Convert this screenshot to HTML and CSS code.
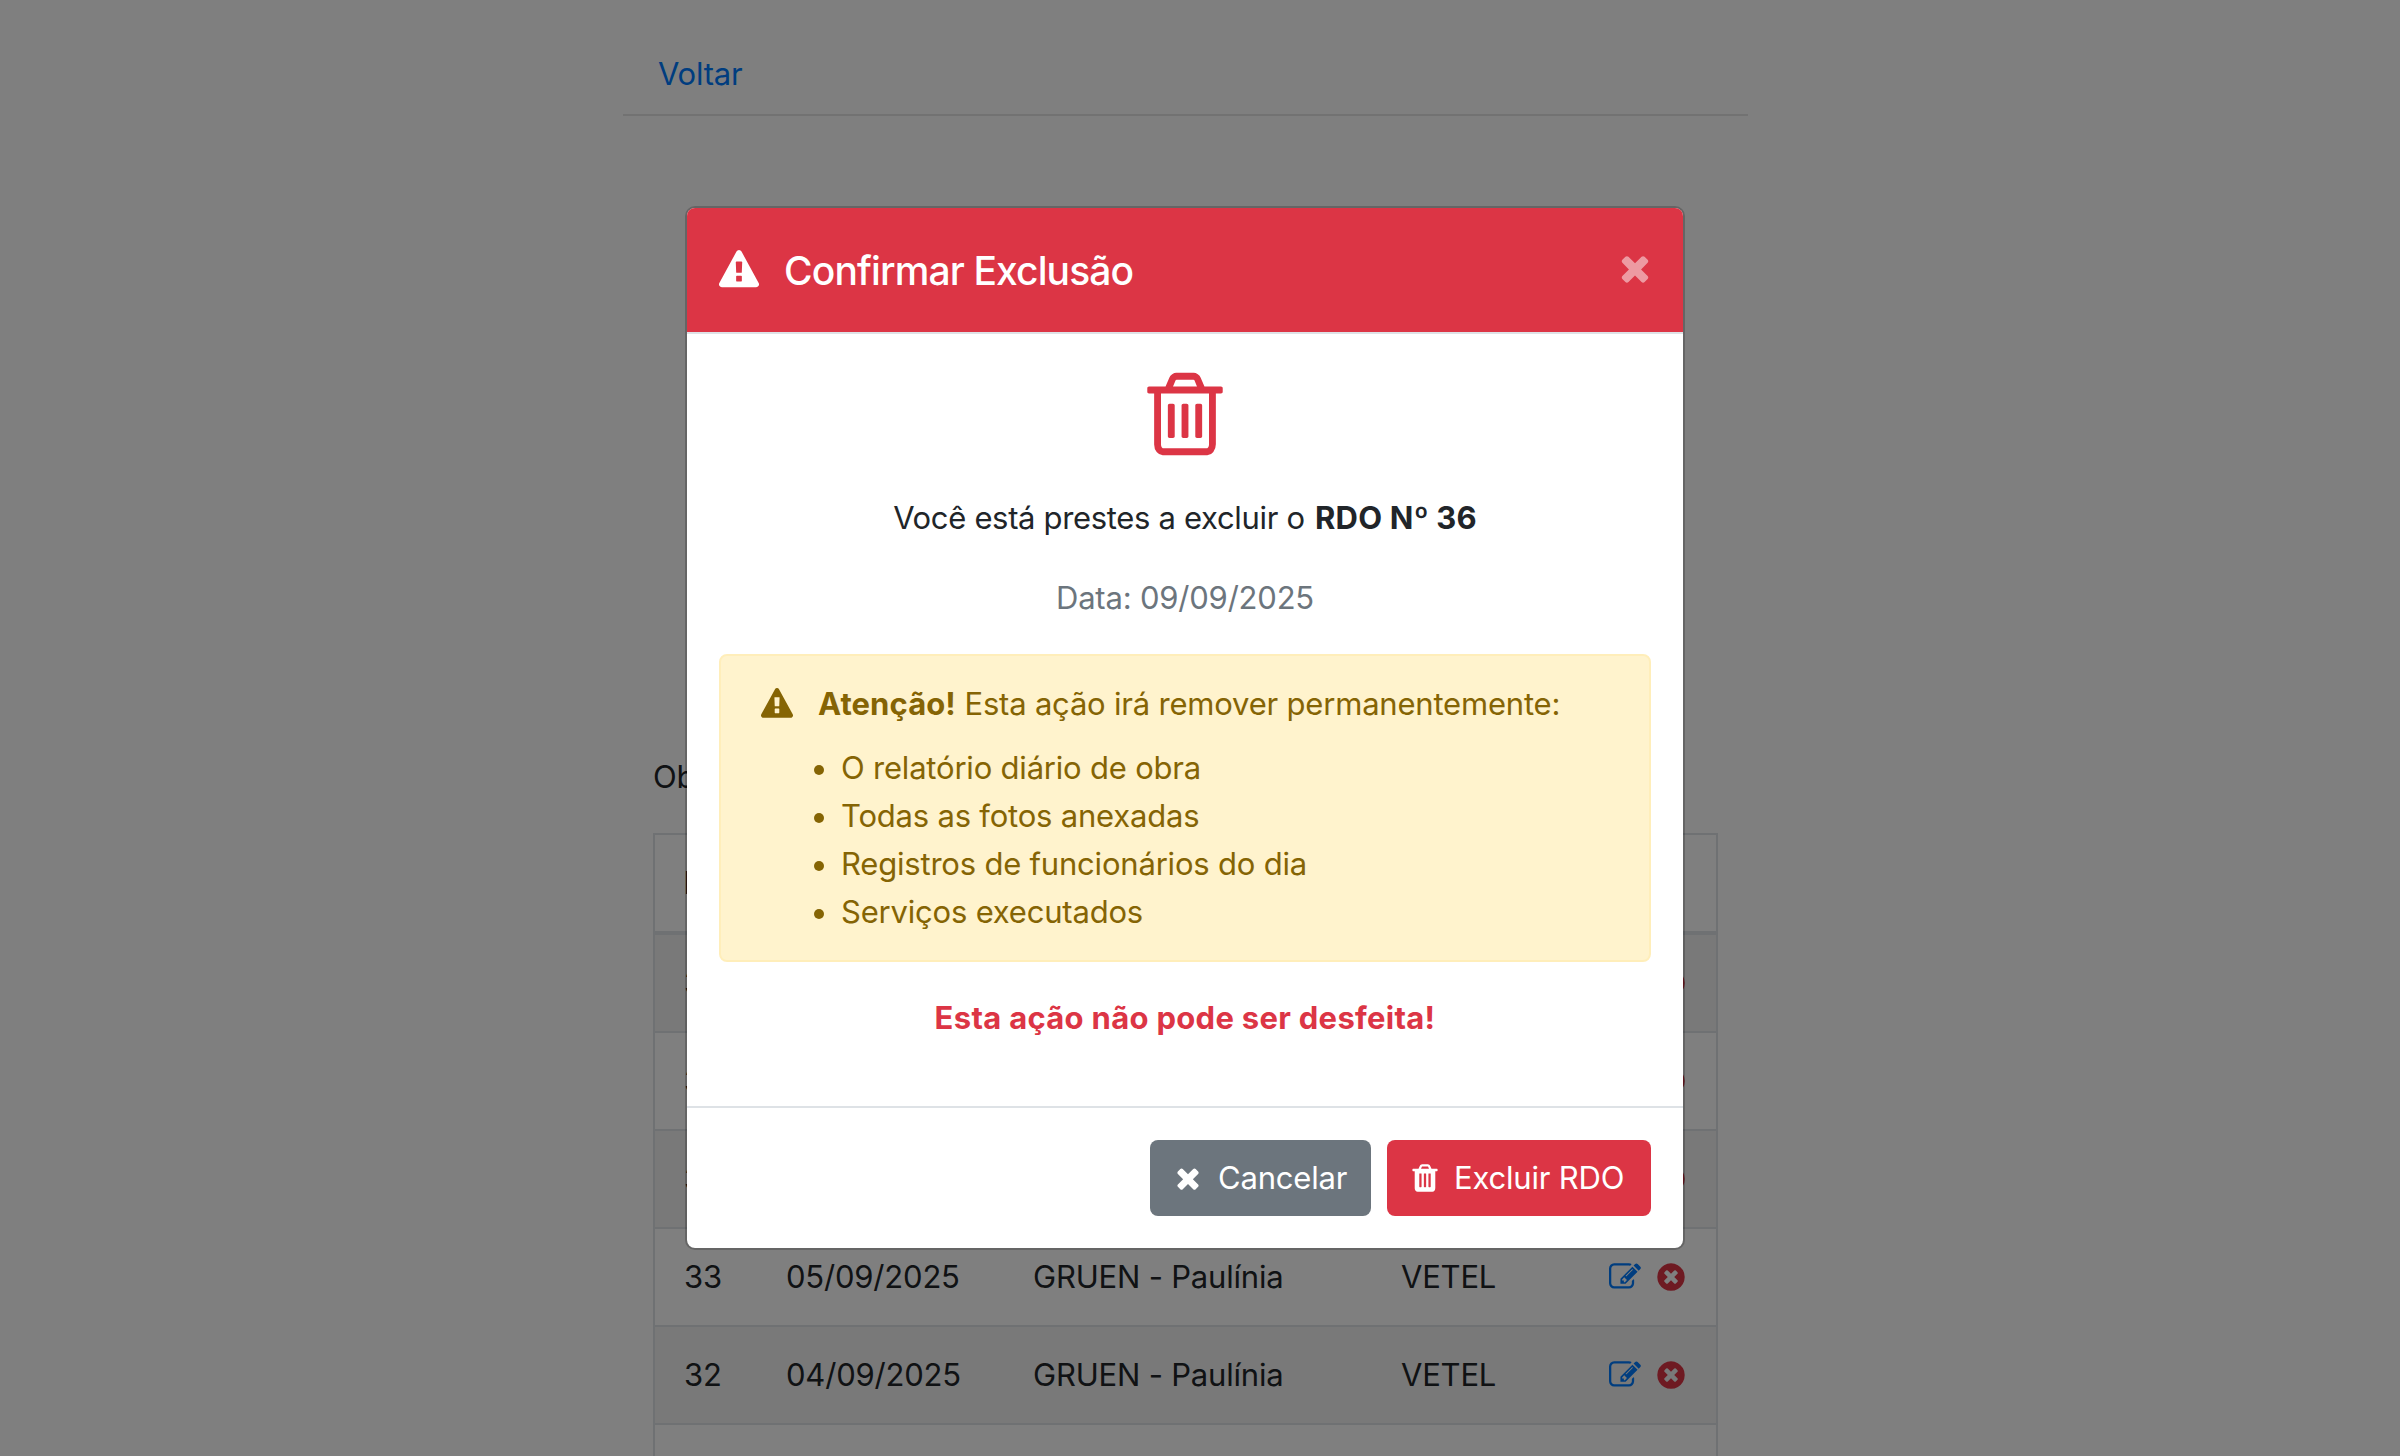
FILE: index.html
```html
<!DOCTYPE html>
<html lang="pt-BR">
<head>
<meta charset="utf-8">
<title>Relatórios</title>
<link rel="stylesheet" href="styles.css">
</head>
<body>
<svg class="sprite" aria-hidden="true">
  <symbol id="warning" viewBox="0 0 1792 1792"><path d="M1024 1375v-190q0-14-9.5-23.5t-22.5-9.5h-192q-13 0-22.5 9.5t-9.5 23.5v190q0 14 9.5 23.5t22.5 9.5h192q13 0 22.5-9.5t9.5-23.5zm-2-374l18-459q0-12-10-19-13-11-24-11h-220q-11 0-24 11-10 7-10 21l17 457q0 10 10 16.5t24 6.5h185q14 0 23.5-6.5t10.5-16.5zm-14-934l768 1408q35 63-2 126-17 29-46.5 46t-63.5 17h-1536q-34 0-63.5-17t-46.5-46q-37-63-2-126l768-1408q17-31 47-49t65-18 65 18 47 49z"/></symbol>
  <symbol id="times" viewBox="0 0 1792 1792"><path d="M1490 1322q0 40-28 68l-136 136q-28 28-68 28t-68-28l-294-294-294 294q-28 28-68 28t-68-28l-136-136q-28-28-28-68t28-68l294-294-294-294q-28-28-28-68t28-68l136-136q28-28 68-28t68 28l294 294 294-294q28-28 68-28t68 28l136 136q28 28 28 68t-28 68l-294 294 294 294q28 28 28 68z"/></symbol>
  <symbol id="trash-o" viewBox="0 0 1792 1792"><path d="M704 736v576q0 14-9 23t-23 9h-64q-14 0-23-9t-9-23v-576q0-14 9-23t23-9h64q14 0 23 9t9 23zm256 0v576q0 14-9 23t-23 9h-64q-14 0-23-9t-9-23v-576q0-14 9-23t23-9h64q14 0 23 9t9 23zm256 0v576q0 14-9 23t-23 9h-64q-14 0-23-9t-9-23v-576q0-14 9-23t23-9h64q14 0 23 9t9 23zm128 724v-948h-896v948q0 22 7 40.5t14.5 27 10.5 8.5h832q3 0 10.5-8.5t14.5-27 7-40.5zm-672-1076h448l-48-117q-7-9-17-11h-317q-10 2-17 11zm928 32v64q0 14-9 23t-23 9h-96v948q0 83-47 143.5t-113 60.5h-832q-66 0-113-58.5t-47-141.5v-952h-96q-14 0-23-9t-9-23v-64q0-14 9-23t23-9h309l70-167q15-37 54-63t79-26h320q40 0 79 26t54 63l70 167h309q14 0 23 9t9 23z"/></symbol>
  <symbol id="trash" viewBox="0 0 1792 1792"><path d="M704 1376v-704q0-14-9-23t-23-9h-64q-14 0-23 9t-9 23v704q0 14 9 23t23 9h64q14 0 23-9t9-23zm256 0v-704q0-14-9-23t-23-9h-64q-14 0-23 9t-9 23v704q0 14 9 23t23 9h64q14 0 23-9t9-23zm256 0v-704q0-14-9-23t-23-9h-64q-14 0-23 9t-9 23v704q0 14 9 23t23 9h64q14 0 23-9t9-23zm-544-992h448l-48-117q-7-9-17-11h-317q-10 2-17 11zm928 32v64q0 14-9 23t-23 9h-96v948q0 83-47 143.5t-113 60.5h-832q-66 0-113-58.5t-47-141.5v-952h-96q-14 0-23-9t-9-23v-64q0-14 9-23t23-9h309l70-167q15-37 54-63t79-26h320q40 0 79 26t54 63l70 167h309q14 0 23 9t9 23z"/></symbol>
  <symbol id="edit" viewBox="0 0 1792 1792"><path d="M888 1184l116-116-152-152-116 116v56h96v96h56zm440-720q-16-16-33 1l-350 350q-17 17-1 33t33-1l350-350q17-17 1-33zm80 594v190q0 119-84.5 203.5t-203.5 84.5h-832q-119 0-203.5-84.5t-84.5-203.5v-832q0-119 84.5-203.5t203.5-84.5h832q63 0 117 25 15 7 18 23 3 17-9 29l-49 49q-14 14-32 8-23-6-45-6h-832q-66 0-113 47t-47 113v832q0 66 47 113t113 47h832q66 0 113-47t47-113v-126q0-13 9-22l64-64q15-15 35-7t20 29zm-96-738l288 288-672 672h-288v-288zm444 132l-92 92-288-288 92-92q28-28 68-28t68 28l152 152q28 28 28 68t-28 68z"/></symbol>
  <symbol id="remove" viewBox="0 0 1792 1792"><path d="M1277 1122q0-26-19-45l-181-181 181-181q19-19 19-45 0-27-19-46l-90-90q-19-19-46-19-26 0-45 19l-181 181-181-181q-19-19-45-19-27 0-46 19l-90 90q-19 19-19 46 0 26 19 45l181 181-181 181q-19 19-19 45 0 27 19 46l90 90q19 19 46 19 26 0 45-19l181-181 181 181q19 19 45 19 27 0 46-19l90-90q19-19 19-46zm387-226q0 209-103 385.5t-279.5 279.5-385.5 103-385.5-103-279.5-279.5-103-385.5 103-385.5 279.5-279.5 385.5-103 385.5 103 279.5 279.5 103 385.5z"/></symbol>
</svg>

<main class="page">
  <nav class="nav"><a class="nav-link" href="#">Voltar</a></nav>
  <section class="content">
    <p class="label">Obra</p>
    <table class="table">
      <colgroup><col class="c-num"><col class="c-date"><col class="c-work"><col class="c-client"><col></colgroup>
      <thead><tr><th>Nº</th><th></th><th></th><th></th><th></th></tr></thead>
      <tbody>
        <tr><td>36</td><td></td><td></td><td></td><td><div class="actions"><svg class="icon edit"><use href="#edit"/></svg><svg class="icon remove"><use href="#remove"/></svg></div></td></tr>
        <tr><td>35</td><td></td><td></td><td></td><td><div class="actions"><svg class="icon edit"><use href="#edit"/></svg><svg class="icon remove"><use href="#remove"/></svg></div></td></tr>
        <tr><td>34</td><td></td><td></td><td></td><td><div class="actions"><svg class="icon edit"><use href="#edit"/></svg><svg class="icon remove"><use href="#remove"/></svg></div></td></tr>
        <tr><td>33</td><td>05/09/2025</td><td>GRUEN - Paulínia</td><td>VETEL</td><td><div class="actions"><svg class="icon edit"><use href="#edit"/></svg><svg class="icon remove"><use href="#remove"/></svg></div></td></tr>
        <tr><td>32</td><td>04/09/2025</td><td>GRUEN - Paulínia</td><td>VETEL</td><td><div class="actions"><svg class="icon edit"><use href="#edit"/></svg><svg class="icon remove"><use href="#remove"/></svg></div></td></tr>
        <tr><td></td><td></td><td></td><td></td><td></td></tr>
      </tbody>
    </table>
  </section>
</main>

<div class="backdrop">
  <div class="modal" role="dialog">
    <header class="modal-header">
      <svg class="icon icon-title"><use href="#warning"/></svg>
      <h5 class="modal-title">Confirmar Exclusão</h5>
      <svg class="icon close"><use href="#times"/></svg>
    </header>
    <div class="modal-body">
      <svg class="icon icon-big"><use href="#trash-o"/></svg>
      <p class="lead">Você está prestes a excluir o <strong>RDO Nº 36</strong></p>
      <p class="muted">Data: 09/09/2025</p>
      <div class="alert">
        <div class="alert-head"><svg class="icon"><use href="#warning"/></svg><span><strong>Atenção!</strong> Esta ação irá remover permanentemente:</span></div>
        <ul class="alert-list">
          <li>O relatório diário de obra</li>
          <li>Todas as fotos anexadas</li>
          <li>Registros de funcionários do dia</li>
          <li>Serviços executados</li>
        </ul>
      </div>
      <p class="danger">Esta ação não pode ser desfeita!</p>
    </div>
    <footer class="modal-footer">
      <button class="btn btn-cancel"><svg class="icon"><use href="#times"/></svg><span>Cancelar</span></button>
      <button class="btn btn-delete"><svg class="icon"><use href="#trash"/></svg><span>Excluir RDO</span></button>
    </footer>
  </div>
</div>
</body>
</html>
```
FILE: styles.css
```css
* { box-sizing: border-box; }
html { overflow: hidden; }
body {
  margin: 0;
  height: 1456px;
  overflow: hidden;
  background: #fff;
  color: #212529;
  font: 400 31px/48px Inter, "Liberation Sans", sans-serif;
  letter-spacing: -.2px;
}
p, h5, ul { margin: 0; }
strong { font-weight: 700; letter-spacing: .1px; }
.sprite { display: none; }
.icon { flex: none; display: block; width: 32px; height: 32px; fill: currentColor; }

.page { width: 1125px; margin-left: 623px; padding-top: 50px; }
.nav { height: 66px; padding-left: 35px; border-bottom: 2px solid rgba(0, 0, 0, .1); }
.nav-link { color: #007bff; text-decoration: none; }
.content { padding: 637px 30px 0; }
.label { margin-bottom: 32px; }

.table {
  width: 1065px;
  table-layout: fixed;
  border-collapse: separate;
  border-spacing: 0;
  border: 2px solid #dee2e6;
  border-bottom: 0;
}
.c-num { width: 102px; }
.c-date { width: 247px; }
.c-work { width: 368px; }
.c-client { width: 208px; }
.table th, .table td { padding: 24px 0 24px 29px; text-align: left; white-space: nowrap; }
.table th { height: 100px; border-bottom: 4px solid #dee2e6; font-weight: 700; }
.table td { height: 98px; border-bottom: 2px solid #dee2e6; }
.table tbody tr:nth-child(odd) { background: rgba(0, 0, 0, .05); }
.actions { display: flex; align-items: center; gap: 14px; }
.edit { color: #007bff; }
.remove { color: #dc3545; }

.backdrop {
  position: absolute;
  inset: 0;
  padding: 206px 30px 0 0;
  background: rgba(0, 0, 0, .5);
}
.modal {
  width: 1000px;
  margin: 0 auto;
  border: 2px solid rgba(0, 0, 0, .2);
  border-radius: 10px;
  background: #fff;
  background-clip: padding-box;
}
.modal-header {
  display: flex;
  align-items: center;
  height: 126px;
  padding: 0 32px;
  border-bottom: 2px solid #dee2e6;
  border-radius: 8px 8px 0 0;
  background: #dc3545;
  background-clip: padding-box;
  color: #fff;
}
.icon-title { width: 40px; height: 40px; }
.modal-title { margin: 2px 0 0 25px; font-size: 39px; line-height: 60px; font-weight: 500; letter-spacing: -.88px; }
.close { width: 40px; height: 40px; margin: -4px -4px 0 auto; opacity: .5; }

.modal-body { height: 772px; padding: 32px; text-align: center; }
.icon-big { width: 96px; height: 96px; margin: 0 auto 32px; color: #dc3545; }
.modal-body p { margin-bottom: 32px; }
.lead { letter-spacing: -.33px; }
.lead strong { margin-left: 2px; letter-spacing: .2px; }
.muted { color: #6c757d; }
.alert {
  margin-bottom: 32px;
  padding: 24px 40px;
  border: 2px solid #ffeeba;
  border-radius: 8px;
  background: #fff3cd;
  color: #856404;
  text-align: left;
}
.alert-head { display: flex; align-items: center; gap: 25px; margin-bottom: 16px; }
.alert-list { padding: 0 0 0 53px; list-style: none; }
.alert-list li { display: flex; align-items: center; gap: 17px; }
.alert-list li::before { content: ""; width: 10px; height: 10px; margin-top: 3px; border-radius: 50%; background: currentColor; }
.danger { color: #dc3545; font-weight: 700; letter-spacing: .3px; }

.modal-footer {
  display: flex;
  justify-content: flex-end;
  gap: 16px;
  padding: 32px;
  border-top: 2px solid #dee2e6;
}
.btn {
  display: flex;
  align-items: center;
  height: 76px;
  padding: 0 0 0 22px;
  border: 0;
  border-radius: 8px;
  color: #fff;
  font: inherit;
  letter-spacing: -.2px;
  white-space: nowrap;
}
.btn-cancel { width: 221px; gap: 14px; background: #6c757d; }
.btn-delete { width: 264px; gap: 13px; background: #dc3545; }
```
